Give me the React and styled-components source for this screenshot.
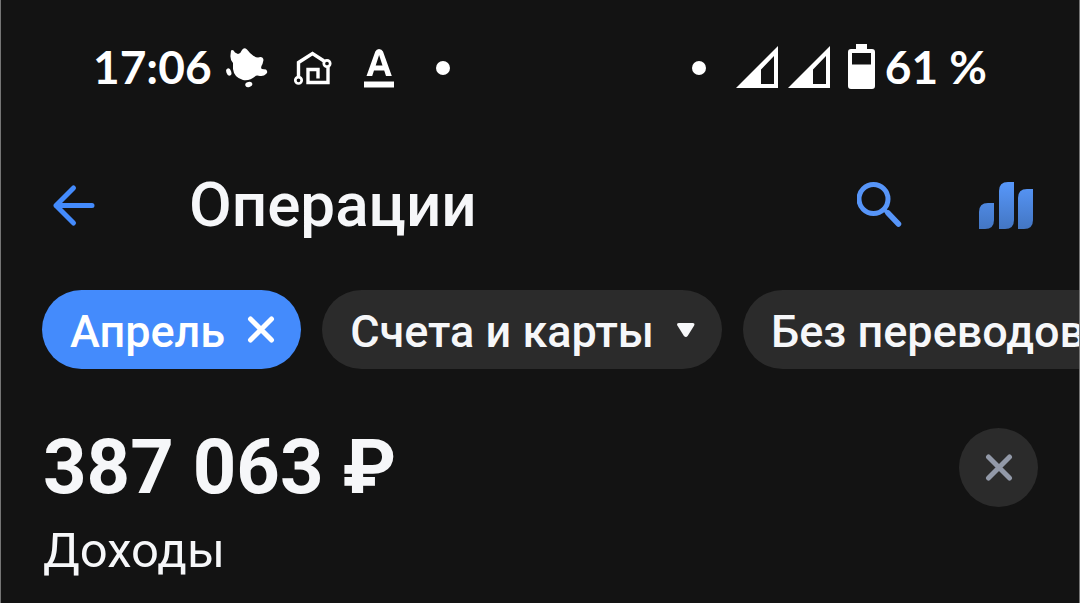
import React from "react";
import styled, { createGlobalStyle } from "styled-components";

const GlobalStyle = createGlobalStyle`
  * { box-sizing: border-box; }
  body { margin: 0; background: #131313; }
  button { border: 0; padding: 0; background: none; color: inherit; font: inherit; cursor: pointer; }
  svg { display: block; flex: none; }
`;

const Screen = styled.div`
  min-height: 100vh;
  overflow: hidden;
  background: #131313;
  border-left: 1px solid #757575;
  border-right: 1px solid #757575;
  color: #f6f7f9;
  font-family: Roboto, "Liberation Sans", sans-serif;
`;

const StatusBar = styled.div`
  display: flex;
  justify-content: space-between;
  height: 136px;
  padding: 0 92px;
  color: #fff;
  font-family: Lato, sans-serif;
  font-size: 46px;
  font-weight: 700;
  line-height: 56px;
`;

const StatusGroup = styled.div`
  display: flex;
  align-items: center;
  gap: ${(p) => p.$gap}px;
`;

const StatusText = styled.span`
  padding-bottom: 2px;
`;

const Signals = styled.div`
  display: flex;
  align-items: center;
  gap: 10px;
`;

const Dot = styled.span`
  width: 14px;
  height: 14px;
  margin: 0 ${(p) => p.$space}px;
  border-radius: 50%;
  background: #fff;
`;

const Header = styled.header`
  display: flex;
  align-items: center;
  height: 138px;
  padding: 0 44px 0 50px;
`;

const Title = styled.h1`
  flex: 1;
  margin: 0 0 0 92px;
  font-size: 62px;
  font-weight: 500;
  line-height: 72px;
`;

const HeaderActions = styled.div`
  display: flex;
  align-items: center;
  gap: 76px;
`;

const Filters = styled.div`
  display: flex;
  gap: 21px;
  padding: 16px 0 0 41px;
  overflow: hidden;
`;

const Chip = styled.button`
  && {
    display: flex;
    flex: none;
    align-items: center;
    gap: 22px;
    height: 79px;
    padding: 0 26px 0 28px;
    border-radius: 40px;
    background: ${(p) => (p.$active ? "#448bfc" : "#2b2b2b")};
    color: ${(p) => (p.$active ? "#fff" : "#f6f7f9")};
    font-size: 45px;
    font-weight: 500;
    line-height: 56px;
    white-space: nowrap;
  }

  span {
    padding-top: 4px;
  }
`;

const Summary = styled.section`
  display: flex;
  align-items: flex-start;
  justify-content: space-between;
  padding: 59px 41px 0 42px;
`;

const Amount = styled.p`
  margin: 0;
  font-size: 76px;
  font-weight: 700;
  line-height: 78px;
`;

const Caption = styled.p`
  margin: 17px 0 0;
  font-size: 49px;
  line-height: 56px;
`;

const CloseButton = styled.button`
  && {
    display: grid;
    place-items: center;
    width: 79px;
    height: 79px;
    border-radius: 50%;
    background: #2b2b2b;
    color: #9299a8;
  }
`;

const Cross = () => (
  <svg width="28" height="28" viewBox="0 0 28 28" fill="none" stroke="currentColor" strokeWidth="5" strokeLinecap="round" aria-hidden="true">
    <path d="M3.500 3l21 21M24.500 3l-21 21" />
  </svg>
);

const Caret = () => (
  <svg width="20" height="20" viewBox="0 0 20 20" fill="currentColor" aria-hidden="true">
    <path d="M3 3h13.500q3 0 1.500 2.700l-6.200 10q-2 2.600-4 0l-6.300-10Q0 3 3 3z" />
  </svg>
);

const Leaf = () => (
  <svg width="42" height="40" viewBox="0 0 42 40" fill="#fff" aria-hidden="true">
    <path d="M5 2.500Q7 1 9 4.500L12 6Q15 5 16 2Q18-1 21 1.500L24 5Q28 9 32 9.500Q37 8 37.500 12L36.500 16Q34 20 36 21L40 21.500Q42.500 24 40 26Q38 28.500 34 28Q30 27 29 28.500Q24 33 17 32Q8 29.500 7 21V15Q4 12 4.500 7Z" />
    <ellipse cx="2.800" cy="24" rx="2.400" ry="3.800" transform="rotate(-18 2.800 24)" />
    <ellipse cx="22.800" cy="36.500" rx="3.600" ry="2.500" transform="rotate(-15 22.800 36.500)" />
  </svg>
);

const SmartHome = () => (
  <svg width="38" height="34" viewBox="0 0 38 34" fill="none" stroke="#fff" strokeWidth="3.400" aria-hidden="true">
    <path d="M4.500 25V11.500L18.500 2.500L30 10M34 16V31.500H14V18.500H24V27.500" />
    <circle cx="33" cy="12.500" r="3.200" strokeWidth="2.700" />
    <circle cx="4.500" cy="29.300" r="3.200" strokeWidth="2.700" />
  </svg>
);

const LetterMark = () => (
  <svg width="30" height="40" viewBox="0 0 30 40" fill="#fff" aria-hidden="true">
    <path fillRule="evenodd" d="M2.500 28L11.300 3.500Q12.500 1 15 1Q17.800 1 19 3.500L27.800 28H22L20.200 22.500H10L8.200 28ZM11.700 17.500H18.500L15.100 7Z" />
    <path d="M0 33.500h30v6H0z" />
  </svg>
);

const Signal = () => (
  <svg width="42" height="44" viewBox="0 0 42 44" fill="#fff" aria-hidden="true">
    <path fillRule="evenodd" d="M42 0V42H0ZM38 10L25 23.500V38H38Z" />
  </svg>
);

const Battery = () => (
  <svg width="27" height="48" viewBox="0 0 27 48" fill="#fff" aria-hidden="true">
    <path fillRule="evenodd" d="M8 0H19V5H24Q27 5 27 8V42Q27 45 24 45H3Q0 45 0 42V8Q0 5 3 5H8ZM4 9V20.500H23V9Z" />
  </svg>
);

const BackArrow = () => (
  <svg width="46" height="44" viewBox="0 0 46 44" fill="none" stroke="#448bfc" strokeWidth="5" strokeLinecap="round" strokeLinejoin="round" aria-hidden="true">
    <path d="M41 22.500H5M22.500 5L5 22.500L22.500 40" />
  </svg>
);

const SearchIcon = () => (
  <svg width="46" height="46" viewBox="0 0 46 46" fill="none" stroke="#5795f8" strokeLinecap="round" aria-hidden="true">
    <circle cx="16.500" cy="17" r="14.500" strokeWidth="5" />
    <path d="M31 31L41.500 42" strokeWidth="5.500" />
    <path d="M27 27.500L31 31" strokeWidth="4" />
  </svg>
);

const StatsIcon = () => (
  <svg width="56" height="48" viewBox="0 0 56 48" aria-hidden="true">
    <defs>
      <linearGradient id="bars" gradientUnits="userSpaceOnUse" x1="0" y1="0" x2="0" y2="48">
        <stop offset="0" stopColor="#5898fb" />
        <stop offset="1" stopColor="#4376c3" />
      </linearGradient>
    </defs>
    <g fill="url(#bars)">
      <path d="M0 48V31Q0 22 9 22H15V39Q15 48 6 48Z" />
      <path d="M20 48V10Q20 1 29 1H35V39Q35 48 26 48Z" />
      <path d="M39 48V17Q39 8 48 8H54V39Q54 48 45 48Z" />
    </g>
  </svg>
);

export default function App() {
  return (
    <>
      <GlobalStyle />
      <Screen>
        <StatusBar>
          <StatusGroup $gap={26}>
            <StatusGroup $gap={14}>
              <StatusText as="time">17:06</StatusText>
              <Leaf />
            </StatusGroup>
            <StatusGroup $gap={32}>
              <SmartHome />
              <LetterMark />
            </StatusGroup>
            <Dot $space={16} />
          </StatusGroup>
          <StatusGroup $gap={18}>
            <Dot $space={12} />
            <Signals>
              <Signal />
              <Signal />
            </Signals>
            <StatusGroup $gap={10}>
              <Battery />
              <StatusText>61 %</StatusText>
            </StatusGroup>
          </StatusGroup>
        </StatusBar>
        <Header>
          <button type="button" aria-label="Назад"><BackArrow /></button>
          <Title>Операции</Title>
          <HeaderActions>
            <button type="button" aria-label="Поиск"><SearchIcon /></button>
            <button type="button" aria-label="Статистика"><StatsIcon /></button>
          </HeaderActions>
        </Header>
        <Filters>
          <Chip type="button" $active><span>Апрель</span><Cross /></Chip>
          <Chip type="button"><span>Счета и карты</span><Caret /></Chip>
          <Chip type="button"><span>Без переводов</span><Caret /></Chip>
        </Filters>
        <Summary>
          <div>
            <Amount>387 063 ₽</Amount>
            <Caption>Доходы</Caption>
          </div>
          <CloseButton type="button" aria-label="Закрыть"><Cross /></CloseButton>
        </Summary>
      </Screen>
    </>
  );
}
